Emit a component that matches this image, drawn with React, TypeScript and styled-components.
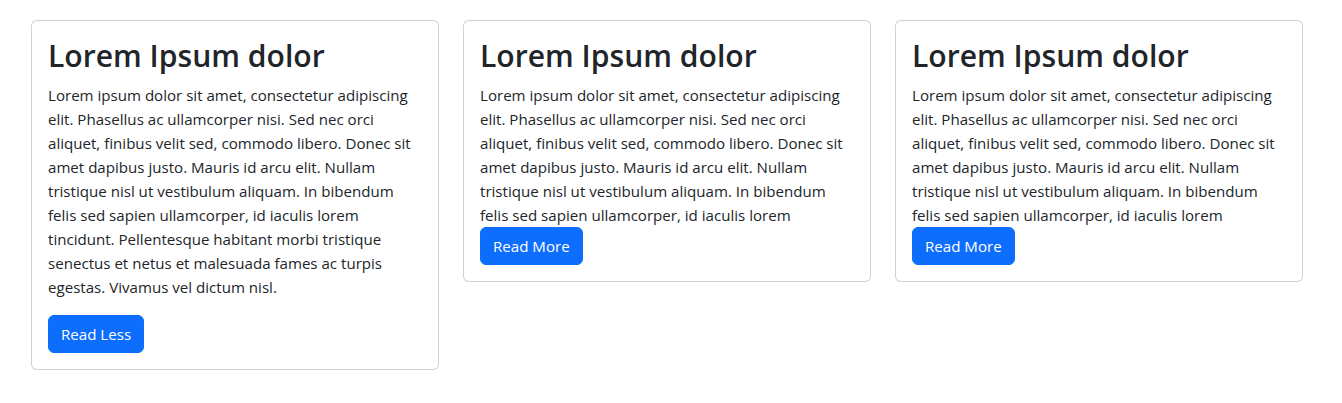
import { useState } from 'react'
import styled, { createGlobalStyle } from 'styled-components'

const GlobalStyle = createGlobalStyle`
  *, *::before, *::after {
    box-sizing: border-box;
  }
  body {
    margin: 0;
    background: #fff;
    color: #212529;
    font-family: 'Open Sans', 'Noto Sans', sans-serif;
    font-size: 15.1px;
    line-height: 24px;
  }
`

const LOREM =
  'Lorem ipsum dolor sit amet, consectetur adipiscing elit. Phasellus ac ullamcorper nisi. Sed nec orci aliquet, finibus velit sed, commodo libero. Donec sit amet dapibus justo. Mauris id arcu elit. Nullam tristique nisl ut vestibulum aliquam. In bibendum felis sed sapien ullamcorper, id iaculis lorem tincidunt. Pellentesque habitant morbi tristique senectus et netus et malesuada fames ac turpis egestas. Vivamus vel dictum nisl.'

const cards = [
  { id: 1, title: 'Lorem Ipsum dolor', text: LOREM, open: true },
  { id: 2, title: 'Lorem Ipsum dolor', text: LOREM, open: false },
  { id: 3, title: 'Lorem Ipsum dolor', text: LOREM, open: false },
]

const Card = ({ title, text, open }: { title: string; text: string; open: boolean }) => {
  const [expanded, setExpanded] = useState(open)

  return (
    <StyledCard>
      <StyledTitle>{title}</StyledTitle>
      <StyledText $expanded={expanded}>{text}</StyledText>
      <StyledButton onClick={() => setExpanded(!expanded)}>
        {expanded ? 'Read Less' : 'Read More'}
      </StyledButton>
    </StyledCard>
  )
}

const App = () => {
  return (
    <>
      <GlobalStyle />
      <StyledGrid>
        {cards.map((card) => (
          <Card key={card.id} title={card.title} text={card.text} open={card.open} />
        ))}
      </StyledGrid>
    </>
  )
}

export default App

const StyledGrid = styled.main`
  display: grid;
  grid-template-columns: repeat(3, 408px);
  gap: 24px;
  align-items: start;
  padding: 20px 31px;
`
const StyledCard = styled.div`
  display: flex;
  flex-direction: column;
  align-items: flex-start;
  padding: 16px;
  border: 1px solid rgba(0, 0, 0, 0.175);
  border-radius: 6px;
  background: #fff;
`
const StyledTitle = styled.h2`
  margin: 0 0 8px;
  font-size: 30.1px;
  font-weight: 600;
  line-height: 38.4px;
`
// collapsed cards show six lines, then the button sits right under them
const StyledText = styled.p<{ $expanded: boolean }>`
  margin: 0 0 ${({ $expanded }) => ($expanded ? '16px' : '0')};
  max-height: ${({ $expanded }) => ($expanded ? 'none' : '144px')};
  overflow: hidden;
`
const StyledButton = styled.button`
  padding: 6px 12px;
  border: 1px solid #0d6efd;
  border-radius: 6px;
  background: #0d6efd;
  color: #fff;
  font-family: inherit;
  font-size: 15.1px;
  line-height: 24px;
  cursor: pointer;
`
